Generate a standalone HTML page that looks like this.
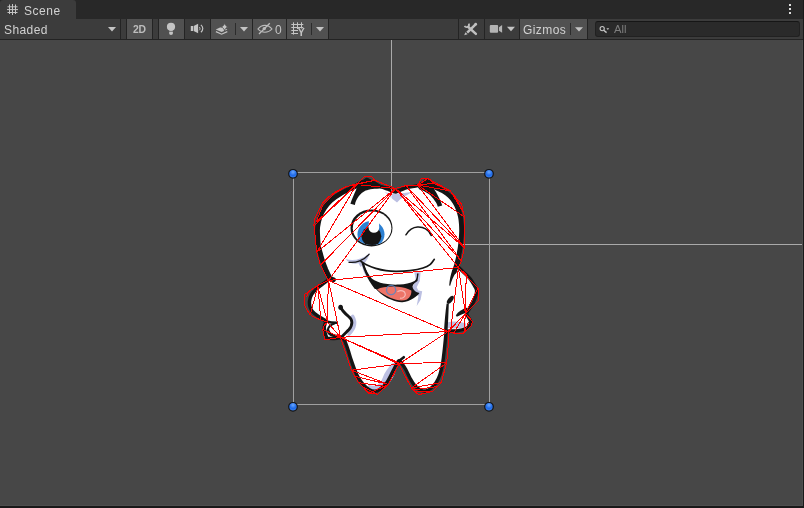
<!DOCTYPE html>
<html>
<head>
<meta charset="utf-8">
<title>Scene</title>
<style>
html,body{margin:0;padding:0;}
body{width:804px;height:508px;overflow:hidden;background:#474747;font-family:"Liberation Sans",sans-serif;position:relative;}
#tabbar{position:absolute;left:0;top:0;width:804px;height:19px;background:#282828;}
#tab{position:absolute;left:0;top:0;width:76px;height:19px;background:#3c3c3c;border-radius:3px 3px 0 0;}
#tab span{will-change:transform;position:absolute;left:23.5px;top:4.4px;font-size:12px;line-height:14px;color:#d2d2d2;letter-spacing:0.55px;}
#toolbar{position:absolute;left:0;top:19px;width:804px;height:20px;background:#3c3c3c;}
#tbline{position:absolute;left:0;top:39px;width:804px;height:1px;background:#232323;}
.btn{position:absolute;top:0;height:20px;background:#515151;}
.sep{position:absolute;top:0;height:20px;width:1px;background:#242424;}
.txt{will-change:transform;position:absolute;font-size:12px;line-height:14px;color:#d2d2d2;white-space:nowrap;}
#search{position:absolute;left:595px;top:2.3px;width:203px;height:13.4px;background:#2a2a2a;border:1px solid #212121;border-top-color:#161616;border-radius:3px;}
#redge{position:absolute;left:803px;top:0;width:1px;height:508px;background:#191919;}
#bedge{position:absolute;left:0;top:506px;width:804px;height:2px;background:#191919;}
svg{position:absolute;left:0;top:0;}
</style>
</head>
<body>
<div id="tabbar"><div id="tab"><span>Scene</span></div></div>
<div id="toolbar">
  <span class="txt" style="left:4px;top:3.7px;letter-spacing:0.4px;">Shaded</span>
  <div class="sep" style="left:120px"></div>
  <div class="sep" style="left:126px"></div>
  <div class="btn" style="left:127px;width:25px"></div>
  <span class="txt" style="left:132.5px;top:4.2px;font-size:10.4px;font-weight:bold;color:#bdbdbd;letter-spacing:-0.2px;">2D</span>
  <div class="sep" style="left:152px"></div>
  <div class="sep" style="left:158px"></div>
  <div class="btn" style="left:159px;width:25px"></div>
  <div class="sep" style="left:184px"></div>
  <div class="sep" style="left:210px"></div>
  <div class="btn" style="left:211px;width:41px"></div>
  <div class="sep" style="left:252px"></div>
  <div class="btn" style="left:253px;width:33px"></div>
  <span class="txt" style="left:274.6px;top:4px;color:#c4c4c4;">0</span>
  <div class="sep" style="left:286px"></div>
  <div class="btn" style="left:287px;width:41px"></div>
  <div class="sep" style="left:328px"></div>
  <div class="sep" style="left:458px"></div>
  <div class="sep" style="left:484px"></div>
  <div class="sep" style="left:519px"></div>
  <div class="btn" style="left:520px;width:67px"></div>
  <span class="txt" style="left:522.8px;top:4px;letter-spacing:0.42px;">Gizmos</span>
  <div class="sep" style="left:587px"></div>
  <div id="search"></div>
  <span class="txt" style="left:613.8px;top:3px;font-size:11.2px;color:#7e7e7e;">All</span>
</div>
<div id="tbline"></div>
<svg id="ui" width="804" height="40" viewBox="0 0 804 40">
  <g fill="#c4c4c4" stroke="none">
    <!-- tab grid icon -->
    <g fill="none" stroke="#c4c4c4" stroke-width="1">
      <path d="M9.5,4.5V14 M12.5,4V15 M15.5,4.5V14 M7.5,6.8H17.5 M7,9.6H18 M7.5,12.5H17.5"/>
    </g>
    <!-- kebab -->
    <rect x="789" y="4" width="2" height="2" fill="#dedede"/><rect x="789" y="8" width="2" height="2" fill="#dedede"/><rect x="789" y="12" width="2" height="2" fill="#dedede"/>
    <!-- dropdown arrows -->
    <path d="M108,27H116L112,31.5Z"/>
    <path d="M240,27H248L244,31.5Z"/>
    <path d="M316,27H324L320,31.5Z"/>
    <path d="M507,26.8H515L511,31.3Z"/>
    <path d="M575,27.2H583L579,31.6Z"/>
    <!-- bulb -->
    <circle cx="171" cy="26.8" r="4.1"/>
    <path d="M169.2,31.7H172.9V33.3C172.9,34.3 172.1,34.9 171,34.9C169.9,34.9 169.2,34.3 169.2,33.3Z"/>
    <rect x="169.4" y="30.2" width="3.3" height="1" fill="#bdbdbd"/>
    <!-- speaker -->
    <rect x="190.8" y="26" width="2.3" height="5"/>
    <path d="M193.7,26L198.1,23.8V33.3L193.7,31Z"/>
    <g fill="none" stroke="#c4c4c4" stroke-width="1">
      <path d="M199.2,27C200.3,27.9 200.3,29.4 199.2,30.3"/>
      <path d="M200.9,24.9C203.4,27 203.4,30.2 200.9,32.3" stroke-width="1.2"/>
    </g>
    <!-- fx layers + sparkle -->
    <path d="M215.8,29.4L221.6,26.8L227.4,29.4L221.6,32Z"/>
    <path d="M215.9,31.6L221.6,34.2L227.3,31.6" fill="none" stroke="#c4c4c4" stroke-width="1.2"/>
    <path d="M224.6,22.4C225,25 226,26.4 228.6,26.9C226,27.4 225,28.8 224.6,31.2C224.2,28.8 223.2,27.4 220.6,26.9C223.2,26.4 224.2,25 224.6,22.4Z" stroke="#515151" stroke-width="0.9"/>
    <!-- eye-off -->
    <g fill="none" stroke="#bcbcbc" stroke-width="1.1">
      <path d="M257.9,29C260,26.3 262.5,25.4 264.9,25.4C267.5,25.4 270,26.5 272,29C270,31.3 267.5,32.3 264.9,32.3C262.3,32.3 260,31.4 257.9,29Z"/>
      <path d="M269.8,23.2L259,34" stroke-width="1.3"/>
    </g>
    <circle cx="264.3" cy="28.6" r="1.7" fill="#bcbcbc"/>
    <!-- grid + Y -->
    <g fill="none" stroke="#c4c4c4" stroke-width="1">
      <path d="M293.5,22.3V34.6 M297.5,22.3V29 M301.5,22.3V28.5 M291.3,24.5H303.3 M291.3,27.5H303.3 M291.3,30.5H298 M291.3,33.5H298"/>
    </g>
    <text x="297.7" y="35.9" font-family="Liberation Sans, sans-serif" font-weight="bold" font-size="10.5" fill="#c4c4c4">Y</text>
    <!-- camera -->
    <rect x="489.8" y="25.1" width="8.3" height="7.7" rx="1" ry="1" fill="#b4b4b4"/>
    <path d="M499,27.2L502.1,25.1V32.8L499,30.8Z" fill="#b4b4b4"/>
    <!-- tools -->
    <g fill="none" stroke="#c0c0c0" stroke-linecap="butt">
      <path d="M468.3,27L475.9,33.9" stroke-width="2.4" stroke-linecap="round"/>
      <path d="M475.6,24.3L467.2,32.7" stroke-width="2.5"/>
      <path d="M468.7,23.7A2.3,2.3 0 1 1 464.6,25.8" stroke-width="1.7"/>
    </g>
    <path d="M464.2,35.3L465.4,32.2L467.6,34.3Z" fill="#c0c0c0"/>
    <circle cx="475.7" cy="24.2" r="1.35" fill="#c0c0c0"/>
    <!-- search icon -->
    <circle cx="602.2" cy="28.6" r="2.1" fill="none" stroke="#c4c4c4" stroke-width="1.1"/>
    <path d="M603.7,30.2L606.6,32.6" fill="none" stroke="#c4c4c4" stroke-width="1.4"/>
    <path d="M606.4,28.3H609.2L607.8,29.9Z"/>
  </g>
  <!-- dividers inside buttons -->
  <rect x="235" y="23" width="1" height="12" fill="#2c2c2c"/>
  <rect x="311" y="23" width="1" height="12" fill="#2c2c2c"/>
  <rect x="570" y="23" width="1" height="12" fill="#2c2c2c"/>
</svg>
<svg id="scene" width="804" height="508" viewBox="0 0 804 508">
<defs>
<radialGradient id="hg" cx="0.5" cy="0.3" r="0.7">
<stop offset="0" stop-color="#6aa8ff"/><stop offset="0.55" stop-color="#1f6ae8"/><stop offset="1" stop-color="#3f86f2"/>
</radialGradient>
</defs>
<rect x="391" y="40" width="1" height="148" fill="#aaaaaa"/>
<rect x="460" y="244" width="343" height="1" fill="#aaaaaa"/>
<g id="tooth" stroke-linejoin="round" stroke-linecap="round">
<path fill="#ffffff" stroke="none" d="M393.5,191.5 C392.6,191.1 390.2,190.1 388.0,189.2 C385.8,188.3 382.3,187.4 380.0,186.3 C377.7,185.2 376.2,183.9 374.0,182.8 C371.8,181.7 368.2,180.1 367.0,179.5 C366.2,180.0 364.2,181.3 362.0,182.6 C359.8,183.9 357.3,185.4 353.5,187.3 C349.7,189.2 343.2,192.1 339.4,194.3 C335.6,196.5 333.1,198.3 330.6,200.7 C328.1,203.1 326.0,205.7 324.2,208.5 C322.4,211.3 320.9,214.3 319.8,217.4 C318.7,220.5 318.0,223.9 317.6,227.0 C317.2,230.1 317.5,233.0 317.6,236.0 C317.7,239.0 317.9,242.2 318.3,245.0 C318.8,247.8 319.3,249.5 320.3,253.0 C321.3,256.5 322.9,261.6 324.3,266.0 C325.8,270.4 328.2,277.2 329.0,279.5 C327.8,280.4 324.1,283.1 322.0,284.7 C319.9,286.2 318.3,287.2 316.6,288.8 C314.9,290.4 312.9,292.2 311.7,294.3 C310.5,296.4 309.7,298.9 309.5,301.2 C309.3,303.5 309.6,306.0 310.4,308.1 C311.2,310.2 312.8,312.0 314.5,313.6 C316.2,315.2 318.8,316.6 320.7,317.8 C322.6,319.0 325.1,320.5 326.0,321.0 C325.7,322.0 324.4,324.9 324.3,327.0 C324.2,329.1 324.9,331.6 325.3,333.5 C325.8,335.4 326.7,337.5 327.0,338.3 C328.2,338.3 331.5,338.6 334.0,338.5 C336.5,338.4 340.7,337.7 342.0,337.5 C342.4,338.0 343.6,338.6 344.6,340.5 C345.6,342.4 346.7,346.0 347.8,349.1 C348.9,352.2 349.9,356.1 351.0,359.3 C352.1,362.5 353.0,365.3 354.2,368.3 C355.4,371.3 356.5,374.5 358.0,377.2 C359.5,379.9 361.3,382.3 363.1,384.3 C364.9,386.3 367.0,388.2 368.9,389.4 C370.8,390.6 372.9,391.3 374.7,391.3 C376.5,391.3 377.9,390.7 379.8,389.4 C381.7,388.1 384.4,386.0 386.2,383.6 C388.0,381.2 389.5,377.9 390.9,375.2 C392.3,372.5 393.5,370.0 394.7,367.7 C395.9,365.4 397.5,362.4 398.3,361.3 C399.1,360.2 399.4,360.9 399.6,360.8 C399.9,361.2 400.5,361.6 401.5,363.0 C402.5,364.4 404.4,366.9 405.8,369.5 C407.2,372.1 408.7,375.8 410.2,378.5 C411.7,381.2 413.0,383.6 414.7,385.5 C416.4,387.4 418.5,389.1 420.5,390.0 C422.5,390.9 424.8,391.3 426.9,390.7 C429.0,390.1 431.4,388.2 433.3,386.2 C435.2,384.2 437.0,381.5 438.4,378.5 C439.8,375.5 440.8,371.9 441.6,368.3 C442.5,364.7 443.0,360.7 443.5,356.8 C444.0,352.9 444.4,348.8 444.8,345.2 C445.2,341.6 445.6,337.3 445.8,335.0 C446.0,332.7 446.1,332.1 446.2,331.5 C447.2,331.0 450.0,331.1 452.0,331.0 C454.0,330.9 455.8,331.1 458.0,330.7 C460.2,330.3 463.4,329.6 465.3,328.8 C467.2,328.0 468.3,327.0 469.2,325.8 C470.1,324.6 471.1,323.5 470.6,321.5 C470.1,319.5 467.0,315.2 466.3,314.0 C466.7,313.3 467.6,311.5 468.8,309.6 C470.0,307.7 472.1,305.0 473.3,302.5 C474.5,300.0 475.6,296.7 476.1,294.6 C476.6,292.5 476.7,291.3 476.5,289.9 C476.3,288.5 475.8,287.8 474.7,286.0 C473.6,284.2 472.0,281.1 470.2,278.9 C468.4,276.7 465.9,274.6 463.9,272.6 C461.9,270.6 459.0,267.8 458.0,266.8 C458.2,264.8 458.6,258.2 459.0,254.5 C459.4,250.8 460.2,248.4 460.6,244.7 C461.0,240.9 461.5,235.4 461.6,232.0 C461.7,228.6 461.6,226.9 461.4,224.3 C461.2,221.7 461.0,219.0 460.4,216.4 C459.8,213.8 459.0,210.9 458.0,208.5 C457.0,206.1 455.9,203.8 454.5,201.7 C453.1,199.6 451.6,197.5 449.6,195.7 C447.6,193.9 445.2,192.3 442.7,190.8 C440.2,189.3 437.4,188.6 434.8,186.9 C432.2,185.2 428.3,181.6 427.0,180.5 C425.5,181.3 421.3,184.3 418.0,185.5 C414.7,186.7 410.7,186.4 407.0,187.5 C403.3,188.6 397.8,191.2 396.0,192.0 Z"/>
<path fill="#bcc0e2" stroke="none" d="M384.5,192 C389,193.5 393,194 396.5,193.5 C401,193.5 407,192.5 412,192 C407,195 403,197.5 400.5,199 L397,202.5 L392.5,199 C390,196.5 387,194 384.5,192Z"/>
<path fill="#bcc0e2" stroke="none" d="M399,362 L394,375.5 L388.5,384.5 L383,389 L376,391 L367,388.5 L368.9,385 C372,386.2 375,386 377.7,384.8 C380,383 381.5,381 382.3,378.8 C383.5,375.5 385,372.5 386.8,370 C388.5,367.5 390.5,365 393,363Z"/>
<path fill="#bcc0e2" stroke="none" d="M414.3,272.3 L420.6,272.3 L419.8,281 L416.7,287.2 L418.3,290.4 L422.2,291.2 L420.6,299.8 L416.7,306.1 L418.5,296 L414.5,293 L412,287.5 L416,281 Z"/>
<path fill="#bcc0e2" stroke="none" d="M447.5,322.5 C452,320.8 460,321.2 466,323.5 C466.5,326 464.5,327.5 461,328 C456,328.6 451,328.6 447.5,328Z"/>
<path fill="none" stroke="#bcc0e2" stroke-width="3.6" d="M352.6,316.5 C355.8,322 354.6,328.5 349,334"/>
<path fill="#bcc0e2" stroke="none" d="M345.5,259 C353,261.6 362,259.6 369.8,253 C368.4,259 364.5,264 360.5,267 L358.5,263.2 C354,264.6 348.5,263 345.5,259Z"/>
<path fill="none" stroke="#bcc0e2" stroke-width="2" d="M363,266 C364,270 365,273 367,276"/>
<path fill="none" stroke="#151515" stroke-width="3.4" d="M393.5,191.5 C392.6,191.1 390.2,190.1 388.0,189.2 C385.8,188.3 382.3,187.4 380.0,186.3 C377.7,185.2 376.2,183.9 374.0,182.8 C371.8,181.7 368.2,180.1 367.0,179.5 C366.2,180.0 364.2,181.3 362.0,182.6 C359.8,183.9 357.3,185.4 353.5,187.3 C349.7,189.2 343.2,192.1 339.4,194.3 C335.6,196.5 333.1,198.3 330.6,200.7 C328.1,203.1 326.0,205.7 324.2,208.5 C322.4,211.3 320.9,214.3 319.8,217.4 C318.7,220.5 318.0,223.9 317.6,227.0 C317.2,230.1 317.5,233.0 317.6,236.0 C317.7,239.0 317.9,242.2 318.3,245.0 C318.8,247.8 319.3,249.5 320.3,253.0 C321.3,256.5 322.9,261.6 324.3,266.0 C325.8,270.4 328.2,277.2 329.0,279.5 C327.8,280.4 324.1,283.1 322.0,284.7 C319.9,286.2 318.3,287.2 316.6,288.8 C314.9,290.4 312.9,292.2 311.7,294.3 C310.5,296.4 309.7,298.9 309.5,301.2 C309.3,303.5 309.6,306.0 310.4,308.1 C311.2,310.2 312.8,312.0 314.5,313.6 C316.2,315.2 318.8,316.6 320.7,317.8 C322.6,319.0 325.1,320.5 326.0,321.0 C325.7,322.0 324.4,324.9 324.3,327.0 C324.2,329.1 324.9,331.6 325.3,333.5 C325.8,335.4 326.7,337.5 327.0,338.3 C328.2,338.3 331.5,338.6 334.0,338.5 C336.5,338.4 340.7,337.7 342.0,337.5 C342.4,338.0 343.6,338.6 344.6,340.5 C345.6,342.4 346.7,346.0 347.8,349.1 C348.9,352.2 349.9,356.1 351.0,359.3 C352.1,362.5 353.0,365.3 354.2,368.3 C355.4,371.3 356.5,374.5 358.0,377.2 C359.5,379.9 361.3,382.3 363.1,384.3 C364.9,386.3 367.0,388.2 368.9,389.4 C370.8,390.6 372.9,391.3 374.7,391.3 C376.5,391.3 377.9,390.7 379.8,389.4 C381.7,388.1 384.4,386.0 386.2,383.6 C388.0,381.2 389.5,377.9 390.9,375.2 C392.3,372.5 393.5,370.0 394.7,367.7 C395.9,365.4 397.5,362.4 398.3,361.3 C399.1,360.2 399.4,360.9 399.6,360.8 C399.9,361.2 400.5,361.6 401.5,363.0 C402.5,364.4 404.4,366.9 405.8,369.5 C407.2,372.1 408.7,375.8 410.2,378.5 C411.7,381.2 413.0,383.6 414.7,385.5 C416.4,387.4 418.5,389.1 420.5,390.0 C422.5,390.9 424.8,391.3 426.9,390.7 C429.0,390.1 431.4,388.2 433.3,386.2 C435.2,384.2 437.0,381.5 438.4,378.5 C439.8,375.5 440.8,371.9 441.6,368.3 C442.5,364.7 443.0,360.7 443.5,356.8 C444.0,352.9 444.4,348.8 444.8,345.2 C445.2,341.6 445.6,337.3 445.8,335.0 C446.0,332.7 446.1,332.1 446.2,331.5 C447.2,331.0 450.0,331.1 452.0,331.0 C454.0,330.9 455.8,331.1 458.0,330.7 C460.2,330.3 463.4,329.6 465.3,328.8 C467.2,328.0 468.3,327.0 469.2,325.8 C470.1,324.6 471.1,323.5 470.6,321.5 C470.1,319.5 467.0,315.2 466.3,314.0 C466.7,313.3 467.6,311.5 468.8,309.6 C470.0,307.7 472.1,305.0 473.3,302.5 C474.5,300.0 475.6,296.7 476.1,294.6 C476.6,292.5 476.7,291.3 476.5,289.9 C476.3,288.5 475.8,287.8 474.7,286.0 C473.6,284.2 472.0,281.1 470.2,278.9 C468.4,276.7 465.9,274.6 463.9,272.6 C461.9,270.6 459.0,267.8 458.0,266.8 C458.2,264.8 458.6,258.2 459.0,254.5 C459.4,250.8 460.2,248.4 460.6,244.7 C461.0,240.9 461.5,235.4 461.6,232.0 C461.7,228.6 461.6,226.9 461.4,224.3 C461.2,221.7 461.0,219.0 460.4,216.4 C459.8,213.8 459.0,210.9 458.0,208.5 C457.0,206.1 455.9,203.8 454.5,201.7 C453.1,199.6 451.6,197.5 449.6,195.7 C447.6,193.9 445.2,192.3 442.7,190.8 C440.2,189.3 437.4,188.6 434.8,186.9 C432.2,185.2 428.3,181.6 427.0,180.5 C425.5,181.3 421.3,184.3 418.0,185.5 C414.7,186.7 410.7,186.4 407.0,187.5 C403.3,188.6 397.8,191.2 396.0,192.0 Z"/>
<path fill="none" stroke="#151515" stroke-width="4.8" d="M362.0,182.6 C360.6,183.4 357.3,185.4 353.5,187.3 C349.7,189.2 343.2,192.1 339.4,194.3 C335.6,196.5 333.1,198.3 330.6,200.7 C328.1,203.1 326.0,205.7 324.2,208.5 C322.4,211.3 320.9,214.3 319.8,217.4 C318.7,220.5 318.1,223.9 317.7,227.0 C317.3,230.1 317.6,233.0 317.7,236.0 C317.8,239.0 317.9,242.2 318.3,245.0 C318.7,247.8 319.6,250.5 320.3,253.0 C321.0,255.5 321.4,257.2 322.3,260.0 C323.2,262.8 324.6,266.6 325.8,269.5 C327.1,272.4 328.5,275.7 329.8,277.4 C331.1,279.1 332.9,279.3 333.5,279.7"/>
<path fill="none" stroke="#151515" stroke-width="4.8" d="M427.0,180.5 C428.3,181.6 432.2,185.2 434.8,186.9 C437.4,188.6 440.2,189.3 442.7,190.8 C445.2,192.3 447.6,193.9 449.6,195.7 C451.6,197.5 453.1,199.6 454.5,201.7 C455.9,203.8 457.0,206.1 458.0,208.5 C459.0,210.9 459.8,213.8 460.4,216.4 C461.0,219.0 461.2,221.7 461.4,224.3 C461.6,226.9 461.7,228.6 461.6,232.0 C461.5,235.4 461.0,240.9 460.6,244.7 C460.2,248.4 459.6,251.2 459.0,254.5 C458.4,257.8 457.5,261.6 456.7,264.4 C455.9,267.2 454.8,270.3 454.4,271.5"/>
<path fill="#151515" stroke="none" d="M350.4,203.7 L354.9,204.9 C356,199 360,193.3 365.7,190.6 C370,188.7 378,188 391.6,188.6 L391.6,187 C384,186 378,184.5 375.5,183 C373,181 371,179.4 366.6,177.8 C362,180 357.5,185 356,190 C353.8,195 352,199 350.4,203.7Z"/>
<path fill="#151515" stroke="none" d="M425.6,178.6 C428,181 431,184.5 433.1,187.7 C435,190 437.6,194.8 440.2,200.1 L442.2,205.6 L437.8,206.8 C437,204 436,202 434.9,201 C433,198 431,195.5 428,193.5 C425,191.5 422.5,190.3 419.5,189.5 L417,186 C419.5,184.5 422.5,181.5 425.6,178.6Z"/>
<clipPath id="eyec"><ellipse cx="372.1" cy="228.3" rx="19.3" ry="16.8"/></clipPath>
<ellipse cx="371.5" cy="227.9" rx="21" ry="18.5" fill="#151515" stroke="none"/>
<ellipse cx="372.1" cy="228.3" rx="19.3" ry="16.8" fill="#fff" stroke="none"/>
<g clip-path="url(#eyec)">
<ellipse cx="371" cy="234.3" rx="13.5" ry="13.3" fill="#2c80d2" stroke="none"/>
<ellipse cx="371.4" cy="236.2" rx="9.9" ry="9.8" fill="#151515" stroke="none"/>
<path d="M368.9,221 L378.9,221 L379.2,227.5 A5.3,5.3 0 0 1 368.6,227.5 Z" fill="#fff" stroke="none"/>
</g>
<path fill="none" stroke="#151515" stroke-width="1.5" d="M405.9,234.8 C409,230 413,227.4 417.5,227.1 C423,226.8 428,229.5 430.8,234.5"/>
<path fill="none" stroke="#151515" stroke-width="1.3" d="M349,262.3 C356,263.2 364,260.2 369,254.3"/>
<path fill="none" stroke="#151515" stroke-width="2" d="M429.8,232.2 L431.4,235.2"/>
<path fill="none" stroke="#151515" stroke-width="1.7" d="M361.0,261.5 C362.1,262.1 365.1,264.2 367.5,265.3 C369.9,266.4 372.6,267.5 375.7,268.4 C378.8,269.3 382.6,270.2 386.0,270.7 C389.4,271.2 392.2,271.4 396.2,271.4 C400.2,271.4 405.5,271.2 410.0,270.6 C414.5,270.0 419.7,269.0 423.0,268.0 C426.3,267.0 428.1,266.1 430.0,264.6 C431.9,263.2 433.6,260.2 434.3,259.3"/>
<path fill="#151515" stroke="none" d="M362.4,263.6 C364.5,270 366.5,275 369.4,279.4 C372,284 374.5,287.5 377.3,290.4 C381.5,294.5 386,297.8 391.5,299.8 C395,301.5 399,302.4 402.5,302.2 C406.5,301.8 410,300.5 413.5,298.3 C416,296.5 418,295 419.5,293 L417,292.3 C414.5,291 412.5,289 412.5,286.5 C413,284 415,282.5 417.5,281 L418.6,273.5 L417,273.5 C417,277 416.5,279.5 414.5,281 C410,283.2 405,284.3 399.4,284.6 C394,284.9 389,284.6 383.6,283.6 C379,282.5 375,281 372,278.8 C368.5,275 366,270 364,263.8 Z"/>
<path fill="#ee7468" stroke="none" d="M377,289.5 C382,286.6 390,286.3 398,286.8 C403,287.2 408,288.5 411.3,290.6 C411.8,294 410,297.5 407,299.5 C404,300.8 400,300.8 396,299.8 C389,297.8 382,294 377,289.5Z"/>
<path fill="none" stroke="#f7b9b6" stroke-width="1.2" d="M397.8,291.5 C401,289.6 405,291 405.3,294 C405.5,296.5 403,298.5 400.5,298.2"/>
<circle cx="391.1" cy="290" r="4.6" fill="none" stroke="#5686c6" stroke-width="1.3" opacity="0.85"/>
<path fill="none" stroke="#151515" stroke-width="2" d="M362.6,263.2 C364.8,270 367,275.4 370,280.2 C371.6,282.8 373.4,285.6 375.4,288"/>
<path fill="none" stroke="#151515" stroke-width="2.6" d="M399,361 L403.8,357.2"/>
<path fill="none" stroke="#151515" stroke-width="2.6" d="M326,321.5 C329.5,322.3 333,322.8 336.5,322.8"/>
<path fill="none" stroke="#151515" stroke-width="2" d="M334.5,323.5 C330.5,324.5 327.5,327.5 328,330.5"/>
<path fill="none" stroke="#151515" stroke-width="3" d="M328,330.5 C328.5,333.8 332,336 339,336.6"/>
<path fill="none" stroke="#151515" stroke-width="2.9" d="M340.8,307 C342,311 345,313.5 348.5,316.3 C352.8,319.5 353,325 349,329.5 C346.3,332.3 343.5,334.5 341.6,337.2"/>
<ellipse cx="340.6" cy="307.3" rx="2.3" ry="2.6" fill="#151515" stroke="none"/>
<path fill="#151515" stroke="none" d="M452.3,270 L456.4,272 C453.2,276.5 451.4,280.8 450.2,285.8 L449.2,285.5 C449.6,280 450.6,275 452.3,270Z"/>
<ellipse cx="450.3" cy="299.8" rx="2.3" ry="4.7" transform="rotate(38 450.3 299.8)" fill="#151515" stroke="none"/>
<path fill="#151515" stroke="none" d="M446.6,303.5 L448.8,303.8 C448.6,313 448,322 447.6,331 L444,331 C444.6,321 445.4,312 446.6,303.5Z"/>
<path fill="#151515" stroke="none" d="M455.8,315.2 C458.5,311.6 462.5,309.2 467.4,307.6 L467.2,311.8 C463.5,313.8 459.5,315.8 456.8,316.7Z"/>
</g>
<rect x="391" y="188" width="1" height="12" fill="#ffffff" fill-opacity="0.5"/>
<g fill="none" stroke="#ff0000" stroke-width="1" shape-rendering="crispEdges">
<path d="M364.1,176.7 L371.8,176.7 L374.7,180.3 L395.4,188.5 L406.0,185.6 L417.8,185.0 L421.3,178.5 L427.8,178.5 L434.9,183.8 L450.3,190.9 L456.2,198.0 L461.5,203.9 L463.3,212.2 L464.4,216.9 L464.4,247.7 L461.4,261.0 L458.4,267.5 L478.0,288.3 L478.0,300.9 L465.4,313.5 L472.5,321.4 L470.9,326.1 L463.9,333.2 L453.6,333.2 L448.1,331.5 L448.3,345.4 L446.6,363.0 L441.3,382.6 L432.4,391.5 L418.5,394.7 L411.4,388.0 L399.0,364.0 L388.3,384.4 L377.7,394.2 L368.9,393.3 L358.5,382.6 L351.4,370.2 L340.5,337.3 L324.8,339.8 L322.8,329.5 L324.1,325.3 L327.6,322.3 L315.2,317.8 L309.7,314.3 L304.1,304.7 L304.8,294.3 L317.9,285.3 L328.5,280.5 L320.4,265.2 L316.8,252.2 L313.9,225.0 L314.5,219.3 L318.0,212.2 L322.7,202.7 L328.0,197.4 L336.9,190.9 L345.8,186.8 L357.0,183.8Z"/>
<path d="M357.0,183.8 L374.7,180.3 M360.5,185.0 L395.4,188.5 M364.1,176.7 L357.0,183.8 M374.7,180.3 L345.8,186.8 M357.0,183.8 L316.8,221.6 M357.0,183.8 L313.9,226.0 M357.0,183.8 L316.8,252.2 M345.8,186.8 L334.5,193.5 L322.7,205.5 L316.3,221.6 M395.4,188.5 L316.8,252.2 M395.4,188.5 L320.4,265.2 M395.4,188.5 L328.5,280.5 M313.9,225.0 L316.8,252.2 M417.8,185.0 L427.8,178.5 M417.8,185.0 L450.3,190.9 M417.8,185.0 L434.0,183.3 M417.8,185.0 L464.4,216.9 M417.8,185.0 L464.4,247.7 M406.0,185.6 L464.4,247.7 M406.0,185.6 L461.4,261.0 M395.4,188.5 L461.4,261.0 M395.4,188.5 L458.4,267.5 M395.4,188.5 L464.4,247.7 M450.3,190.9 L463.3,212.2 M456.2,198.0 L463.3,212.2 M427.8,178.5 L450.3,190.9 M328.5,280.5 L458.4,267.5 M328.5,280.5 L448.1,331.5 M340.5,337.3 L448.1,331.5 M340.5,337.3 L399.0,364.0 M340.5,337.3 L399.0,362.8 M448.1,331.5 L399.0,364.0 M399.0,364.0 L446.6,362.0 M399.0,364.0 L351.4,370.2 M351.4,370.2 L388.3,384.4 M354.0,376.0 L388.3,384.4 M358.5,382.6 L386.0,386.5 M362.0,386.5 L377.7,394.2 M368.9,393.3 L388.3,384.4 M411.4,388.0 L446.6,363.0 M411.4,388.0 L441.3,382.6 M413.0,390.0 L437.5,386.5 M415.0,392.0 L432.4,391.5 M411.4,388.0 L418.5,394.7 M317.9,286.5 L310.3,314.3 M317.9,286.5 L320.7,318.5 M317.9,286.5 L327.6,322.3 M328.5,280.5 L327.0,322.0 M328.5,280.5 L340.5,337.3 M322.8,329.5 L340.5,337.3 M327.6,322.3 L340.5,337.3 M317.9,285.3 L308.5,292.0 L306.5,297.0 M458.4,267.5 L465.4,313.5 M458.4,267.5 L450.5,331.5 M458.4,267.5 L466.2,274.5 L465.4,313.5 M478.0,288.3 L465.4,313.5 M465.4,313.5 L448.1,331.5 M465.4,313.5 L453.6,333.2 M465.4,313.5 L463.9,333.2 M468.5,322.0 L463.9,333.2"/>
</g>
<g fill="#a0a0a0">
<rect x="293" y="172" width="197" height="1"/><rect x="293" y="404" width="197" height="1"/>
<rect x="293" y="172" width="1" height="233"/><rect x="489" y="172" width="1" height="233"/>
</g>
<g stroke="#141414" stroke-width="1.2" fill="url(#hg)">
<circle cx="293" cy="173.8" r="4.3"/><circle cx="489" cy="173.8" r="4.3"/>
<circle cx="293" cy="406.8" r="4.3"/><circle cx="489" cy="406.8" r="4.3"/>
</g>
</svg>
<div style="position:absolute;left:802px;top:40px;width:1px;height:466px;background:#4e4e4e"></div>
<div style="position:absolute;left:0;top:505px;width:803px;height:1px;background:#4e4e4e"></div>
<div id="redge"></div>
<div id="bedge"></div>
</body>
</html>
